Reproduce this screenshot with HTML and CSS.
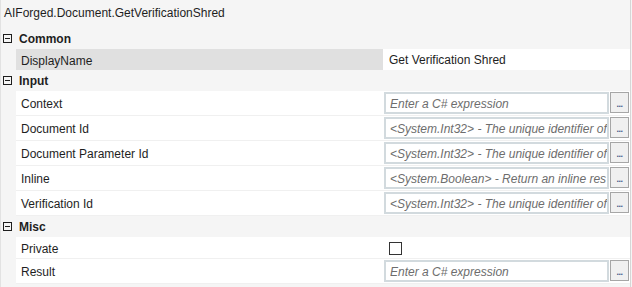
FILE: index.html
```html
<!DOCTYPE html>
<html lang="en">
<head>
    <meta charset="UTF-8">
    <title>Properties</title>
    <link rel="stylesheet" href="styles.css">
</head>
<body>
    <div class="panel">
        <div class="title">AIForged.Document.GetVerificationShred</div>

        <div class="category"><span class="toggle"></span>Common</div>
        <div class="row short selected">
            <div class="name">DisplayName</div>
            <div class="value"><span class="plain">Get Verification Shred</span></div>
        </div>

        <div class="category"><span class="toggle"></span>Input</div>
        <div class="row">
            <div class="name">Context</div>
            <div class="value">
                <div class="expr"><span>Enter a C# expression</span></div>
                <div class="more">...</div>
            </div>
        </div>
        <div class="row">
            <div class="name">Document Id</div>
            <div class="value">
                <div class="expr"><span>&lt;System.Int32&gt; - The unique identifier of</span></div>
                <div class="more">...</div>
            </div>
        </div>
        <div class="row">
            <div class="name">Document Parameter Id</div>
            <div class="value">
                <div class="expr"><span>&lt;System.Int32&gt; - The unique identifier of</span></div>
                <div class="more">...</div>
            </div>
        </div>
        <div class="row">
            <div class="name">Inline</div>
            <div class="value">
                <div class="expr"><span>&lt;System.Boolean&gt; - Return an inline res</span></div>
                <div class="more">...</div>
            </div>
        </div>
        <div class="row">
            <div class="name">Verification Id</div>
            <div class="value">
                <div class="expr"><span>&lt;System.Int32&gt; - The unique identifier of</span></div>
                <div class="more">...</div>
            </div>
        </div>

        <div class="category"><span class="toggle"></span>Misc</div>
        <div class="row check-row">
            <div class="name">Private</div>
            <div class="value"><span class="check"></span></div>
        </div>
        <div class="row">
            <div class="name">Result</div>
            <div class="value">
                <div class="expr"><span>Enter a C# expression</span></div>
                <div class="more">...</div>
            </div>
        </div>
    </div>
</body>
</html>
```

FILE: styles.css
```css
body {
    margin: 0;
    background-color: #f5f5f5;
    font-family: "Segoe UI", "Liberation Sans", Arial, sans-serif;
    font-size: 12px;
    color: #1e1e1e;
}

.panel {
    height: 287px;
    width: 631px;
    border-left: 1px solid #e2e2e2;
    border-right: 1px solid #d6d6d6;
    box-sizing: border-box;
    overflow: hidden;
}

.title {
    height: 28px;
    line-height: 26px;
    padding-left: 3px;
}

.category {
    height: 21px;
    display: flex;
    align-items: center;
    font-weight: bold;
    padding-left: 2px;
}

.toggle {
    width: 7px;
    height: 7px;
    border: 1px solid #1e1e1e;
    margin-right: 7px;
    position: relative;
}

.toggle::after {
    content: "";
    position: absolute;
    left: 1px;
    top: 3px;
    width: 5px;
    height: 1px;
    background: #1e1e1e;
}

.row {
    display: flex;
    height: 25px;
    margin-left: 15px;
    background: #fff;
    border-bottom: 1px solid #f0f0f0;
    box-sizing: border-box;
}

.row.short {
    height: 21px;
}

.row.check-row {
    height: 22px;
}

.name {
    width: 362px;
    padding: 2px 0 0 5px;
    display: flex;
    align-items: center;
    flex-shrink: 0;
}

.selected {
    border-bottom: none;
}

.selected .name {
    background: #e0e0e0;
    margin-right: 1px;
}

.value {
    flex: 1;
    display: flex;
    align-items: flex-start;
    padding: 1px 1px 0 1px;
    min-width: 0;
}

.plain {
    padding-left: 4px;
    align-self: center;
}

.expr {
    width: 225px;
    height: 22px;
    box-sizing: border-box;
    border: 2px solid #d2dade;
    padding: 2px 0 0 4px;
    line-height: 16px;
    font-style: italic;
    color: #6d6d6d;
    white-space: nowrap;
    overflow: hidden;
    flex-shrink: 0;
}

.expr span {
    display: block;
    overflow: hidden;
}

.more {
    width: 19px;
    height: 21px;
    margin-left: 1px;
    box-sizing: border-box;
    border: 1px solid #a6a6a6;
    background: #f0f0f0;
    display: flex;
    align-items: flex-end;
    justify-content: center;
    padding-bottom: 3px;
    font-size: 9px;
    font-weight: bold;
    line-height: 9px;
    color: #4a5a8a;
    letter-spacing: -0.5px;
}

.check {
    width: 13px;
    height: 13px;
    box-sizing: border-box;
    border: 1px solid #333;
    margin: 4px 0 0 5px;
    background: #fff;
}
```
